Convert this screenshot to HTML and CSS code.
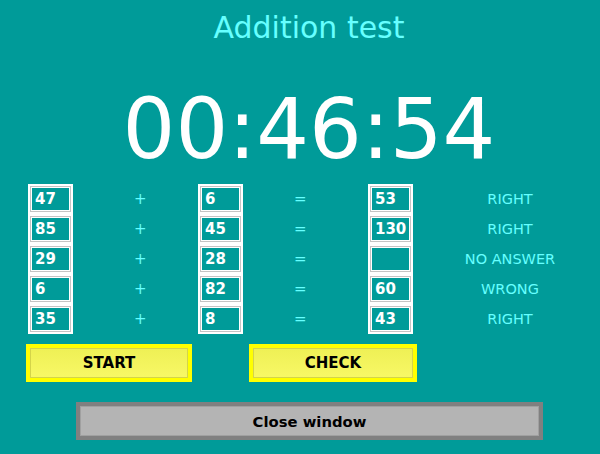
FILE: index.html
```html
<!DOCTYPE html>
<html>
<head>
<meta charset="utf-8">
<title>Addition test</title>
<link rel="stylesheet" href="styles.css">
</head>
<body>
<header class="head">
  <h1 class="title">Addition test</h1>
  <div class="timer">00:46:54</div>
</header>
<div class="sums">
  <div class="col"><div class="box">47</div></div>
  <div class="op plus">+</div>
  <div class="col"><div class="box">6</div></div>
  <div class="op eq">=</div>
  <div class="col"><div class="box">53</div></div>
  <div class="status">RIGHT</div>

  <div class="col"><div class="box">85</div></div>
  <div class="op plus">+</div>
  <div class="col"><div class="box">45</div></div>
  <div class="op eq">=</div>
  <div class="col"><div class="box">130</div></div>
  <div class="status">RIGHT</div>

  <div class="col"><div class="box">29</div></div>
  <div class="op plus">+</div>
  <div class="col"><div class="box">28</div></div>
  <div class="op eq">=</div>
  <div class="col"><div class="box"></div></div>
  <div class="status">NO ANSWER</div>

  <div class="col"><div class="box">6</div></div>
  <div class="op plus">+</div>
  <div class="col"><div class="box">82</div></div>
  <div class="op eq">=</div>
  <div class="col"><div class="box">60</div></div>
  <div class="status">WRONG</div>

  <div class="col"><div class="box">35</div></div>
  <div class="op plus">+</div>
  <div class="col"><div class="box">8</div></div>
  <div class="op eq">=</div>
  <div class="col"><div class="box">43</div></div>
  <div class="status">RIGHT</div>
</div>
<div class="actions">
  <button class="btn yellow start">START</button>
  <button class="btn yellow check">CHECK</button>
</div>
<div class="closerow">
  <button class="btn close">Close window</button>
</div>
</body>
</html>
```

FILE: styles.css
```css
html, body {
  margin: 0;
  padding: 0;
}
body {
  background: #009b99;
  font-family: "DejaVu Sans", Verdana, sans-serif;
  width: 600px;
  height: 454px;
  overflow: hidden;
}
.head {
  padding-left: 18px;
  text-align: center;
}
.title {
  margin: 0;
  padding-top: 10px;
  height: 36px;
  line-height: 36px;
  font-size: 30px;
  font-weight: normal;
  color: #66ffff;
}
.timer {
  margin-top: 39px;
  height: 90px;
  line-height: 90px;
  font-size: 83px;
  color: #ffffff;
}
.sums {
  margin-top: 9px;
  padding-left: 28px;
  display: grid;
  grid-template-columns: 45px 125px 45px 125px 45px 1fr;
  grid-auto-rows: 30px;
}
.col {
  background: #ffffff;
  padding: 2px;
}
.box {
  height: 26px;
  box-sizing: border-box;
  border: 1px solid #c4c4c4;
  box-shadow: inset 0 0 0 1px #ffffff;
  background: #009b99;
  color: #ffffff;
  font-weight: bold;
  font-size: 15px;
  line-height: 24px;
  padding-left: 4px;
}
.op {
  color: #66ffff;
  font-size: 15px;
  line-height: 30px;
}
.plus {
  padding-left: 61px;
}
.eq {
  padding-left: 51px;
}
.status {
  color: #66ffff;
  font-size: 14.5px;
  line-height: 30px;
  text-align: center;
  padding-left: 7px;
}
.actions {
  margin-top: 10px;
  padding-left: 26px;
  display: flex;
  gap: 57px;
}
.btn {
  height: 38px;
  box-sizing: border-box;
  margin: 0;
  padding: 0;
  font-family: "DejaVu Sans", Verdana, sans-serif;
  font-weight: bold;
  font-size: 15px;
  color: #000000;
  cursor: pointer;
}
.yellow {
  border: 4px solid #ffff00;
  box-shadow: inset 0 0 0 1px #d4d44a;
  background: linear-gradient(#eef055, #f8f866);
}
.start {
  width: 166px;
}
.check {
  width: 168px;
}
.closerow {
  margin-top: 20px;
  padding-left: 76px;
}
.close {
  width: 467px;
  border: 4px solid #808080;
  box-shadow: inset 0 0 0 1px #a0a0a0;
  background: #b4b4b4;
  font-size: 14.8px;
}
```
